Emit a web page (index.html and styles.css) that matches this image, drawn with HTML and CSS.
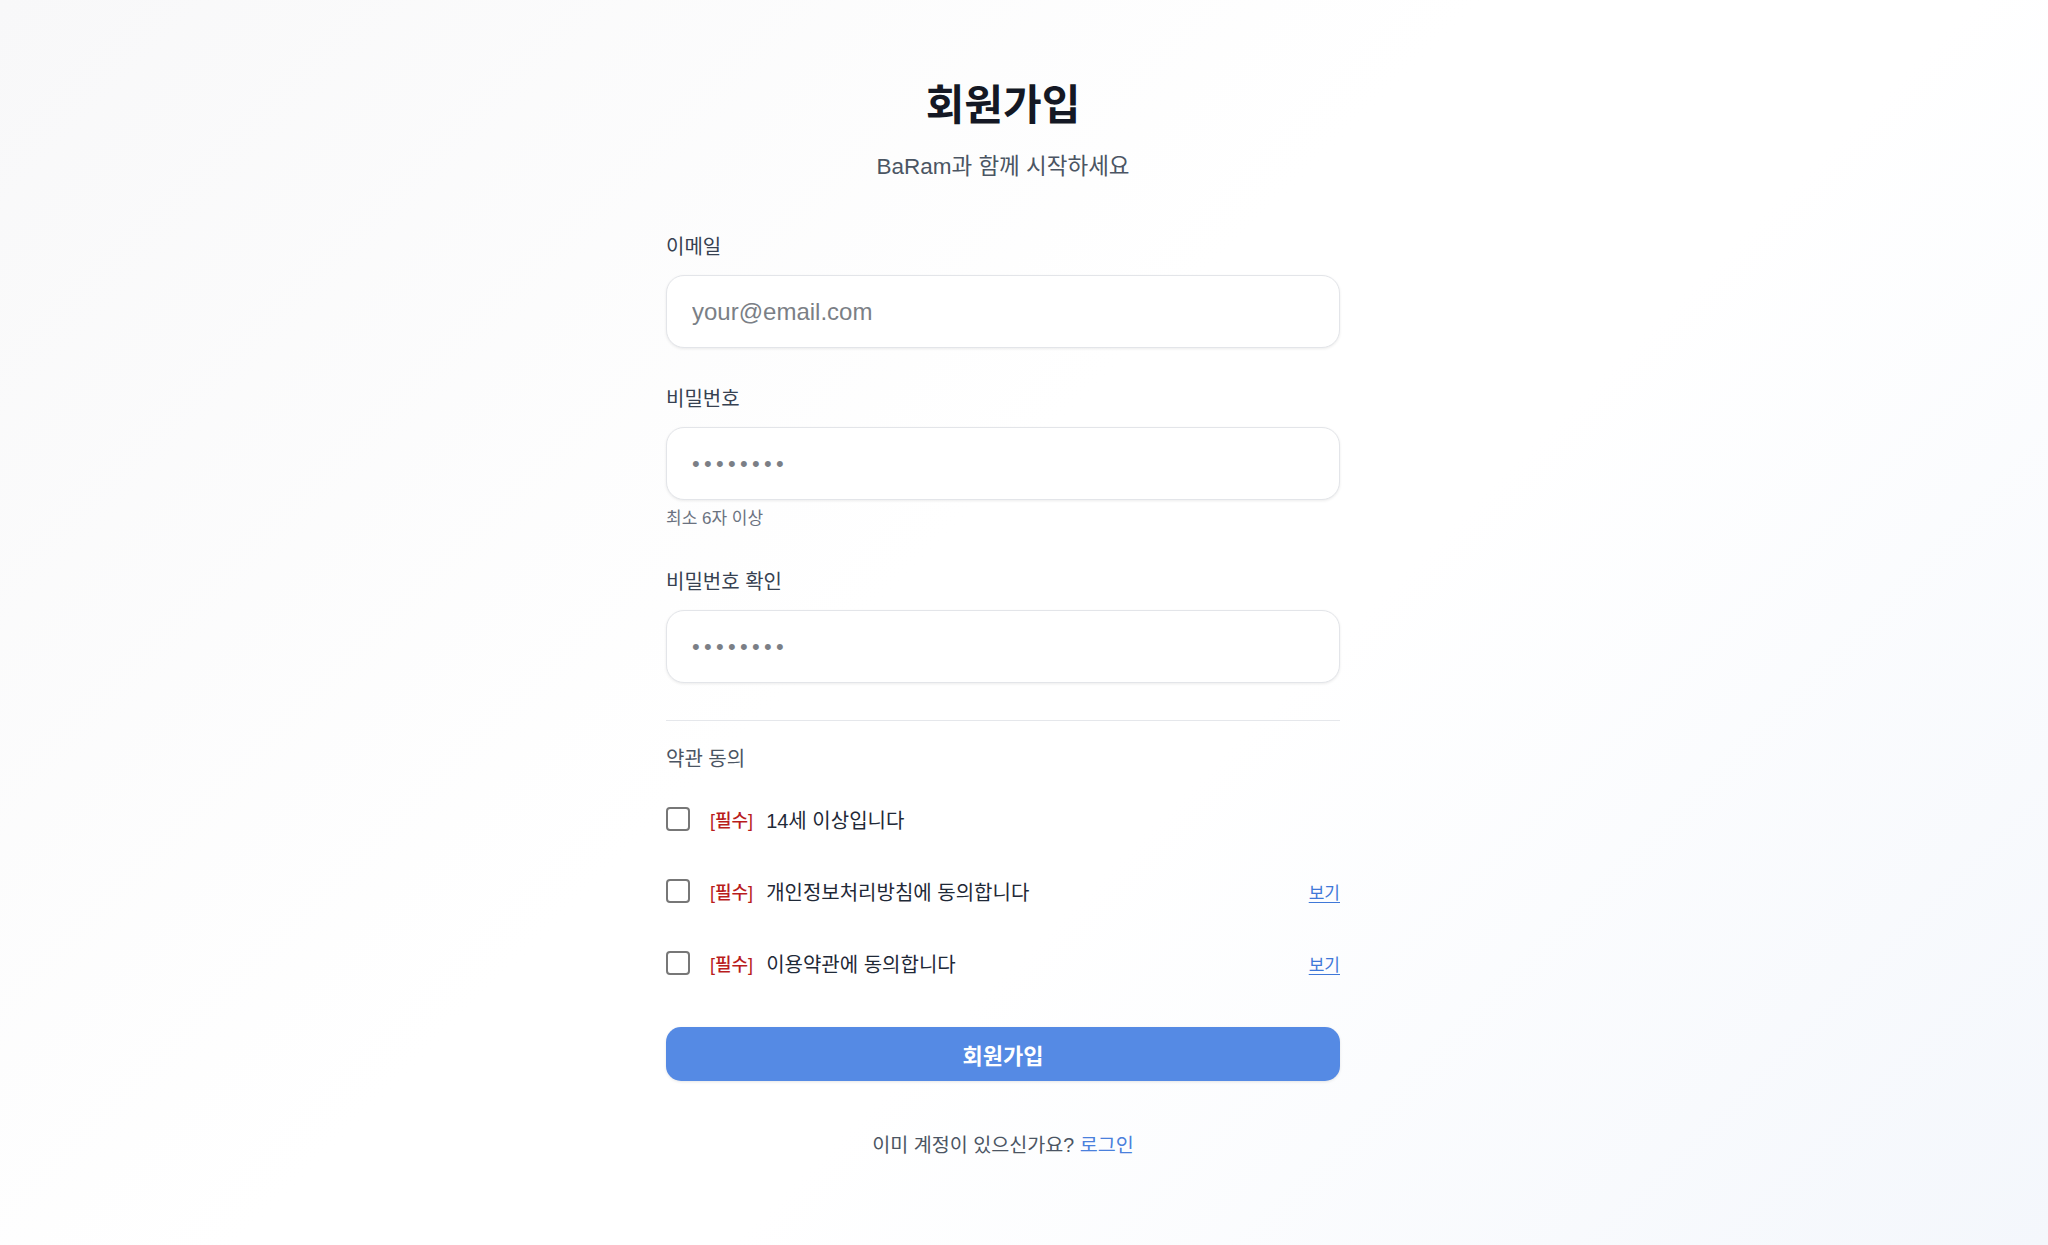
FILE: index.html
```html
<!DOCTYPE html>
<html lang="ko">
<head>
    <meta charset="UTF-8">
    <meta name="viewport" content="width=device-width, initial-scale=1.0">
    <title>회원가입 - BaRam</title>
    <link rel="stylesheet" href="styles.css">
</head>

<body>
    <main class="page">
        <div class="signup">
            <h1 class="signup-title">회원가입</h1>
            <p class="signup-subtitle">BaRam과 함께 시작하세요</p>

            <form class="signup-form" id="signupForm">
                <div class="field">
                    <label class="field-label" for="email">이메일</label>
                    <input class="field-input" type="email" id="email" name="email" placeholder="your@email.com">
                </div>

                <div class="field">
                    <label class="field-label" for="password">비밀번호</label>
                    <input class="field-input field-password" type="password" id="password" name="password" placeholder="••••••••">
                    <p class="field-hint">최소 6자 이상</p>
                </div>

                <div class="field">
                    <label class="field-label" for="passwordConfirm">비밀번호 확인</label>
                    <input class="field-input field-password" type="password" id="passwordConfirm" name="passwordConfirm" placeholder="••••••••">
                </div>

                <hr class="divider">

                <div class="terms">
                    <p class="terms-title">약관 동의</p>
                    <label class="terms-row">
                        <input class="terms-check" type="checkbox" name="age">
                        <span class="terms-required">[필수]</span>
                        <span class="terms-text">14세 이상입니다</span>
                    </label>
                    <label class="terms-row">
                        <input class="terms-check" type="checkbox" name="privacy">
                        <span class="terms-required">[필수]</span>
                        <span class="terms-text">개인정보처리방침에 동의합니다</span>
                        <a class="terms-link" href="#privacy">보기</a>
                    </label>
                    <label class="terms-row">
                        <input class="terms-check" type="checkbox" name="service">
                        <span class="terms-required">[필수]</span>
                        <span class="terms-text">이용약관에 동의합니다</span>
                        <a class="terms-link" href="#terms">보기</a>
                    </label>
                </div>

                <button class="submit-button" type="submit">회원가입</button>
            </form>

            <p class="signup-footer">이미 계정이 있으신가요? <a class="footer-link" href="#login">로그인</a></p>
        </div>
    </main>
</body>
</html>
```

FILE: styles.css
```css
html,
body {
    margin: 0;
    padding: 0;
}

body {
    min-height: 100vh;
    font-family: "Liberation Sans", "Noto Sans CJK KR", sans-serif;
    color: #1f2937;
    background: linear-gradient(135deg, #f8f8f9 0%, #ffffff 45%, #ffffff 60%, #f4f7fc 100%);
}

.page {
    display: flex;
    justify-content: center;
    padding: 83px 42px 60px 0;
}

.signup {
    width: 674px;
}

.signup-title {
    margin: 0;
    font-size: 42px;
    line-height: 46px;
    font-weight: 700;
    text-align: center;
    color: #141824;
}

.signup-subtitle {
    margin: 23px 0 0;
    font-size: 22.5px;
    line-height: 30px;
    text-align: center;
    color: #4b5563;
}

.signup-form {
    display: flex;
    flex-direction: column;
    margin-top: 52px;
}

.field {
    display: flex;
    flex-direction: column;
}

.field + .field {
    margin-top: 38px;
}

.field-label {
    font-size: 20px;
    line-height: 27px;
    color: #374151;
    margin-bottom: 14px;
}

.field-input {
    box-sizing: border-box;
    width: 100%;
    height: 73px;
    padding: 0 25px;
    border: 1px solid #e3e5e9;
    border-radius: 18px;
    background: #fff;
    box-shadow: 0 1px 3px rgba(0, 0, 0, 0.08);
    font-family: inherit;
    font-size: 24px;
    color: #1f2937;
    outline: none;
}

.field-input::placeholder {
    color: #7b7f86;
}

.field-password {
    letter-spacing: 4.3px;
    font-size: 22px;
}

.field-hint {
    margin: 7px 0 0;
    font-size: 17px;
    line-height: 24px;
    color: #6b7280;
}

.divider {
    margin: 37px 0 0;
    border: none;
    border-top: 1px solid #e5e7eb;
}

.terms {
    display: flex;
    flex-direction: column;
    margin-top: 25px;
}

.terms-title {
    margin: 0 0 32px;
    font-size: 20px;
    line-height: 27px;
    color: #4b5563;
}

.terms-row {
    display: flex;
    align-items: center;
    height: 28px;
    font-size: 20px;
    cursor: pointer;
}

.terms-row + .terms-row {
    margin-top: 44px;
}

.terms-check {
    appearance: none;
    box-sizing: border-box;
    width: 24px;
    height: 24px;
    margin: 0;
    border: 2px solid #777;
    border-radius: 4px;
    background: #fff;
    cursor: pointer;
}

.terms-required {
    margin-left: 20px;
    font-size: 18px;
    font-weight: 500;
    color: #b91c1c;
}

.terms-text {
    margin-left: 13px;
    color: #1f2937;
}

.terms-link {
    margin-left: auto;
    font-size: 17px;
    color: #3f78d8;
    text-decoration: underline;
    text-underline-offset: 3px;
}

.submit-button {
    margin-top: 50px;
    height: 54px;
    border: none;
    border-radius: 15px;
    background-color: #558ae4;
    box-shadow: 0 1px 3px rgba(0, 0, 0, 0.1);
    color: #fff;
    font-family: inherit;
    font-size: 22px;
    font-weight: 600;
    cursor: pointer;
}

.submit-button:hover {
    background-color: #4a7fd9;
}

.signup-footer {
    margin: 50px 0 0;
    font-size: 19.6px;
    line-height: 28px;
    text-align: center;
    color: #4b5563;
}

.footer-link {
    color: #4a80dc;
    text-decoration: none;
}
```
